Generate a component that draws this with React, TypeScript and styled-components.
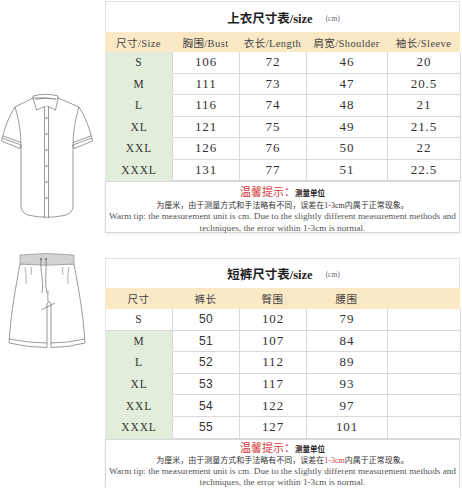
import styled, { createGlobalStyle } from "styled-components";

const GlobalStyle = createGlobalStyle`
  html, body {
    margin: 0;
    padding: 0;
    background: #ffffff;
  }
`;

const COLUMNS = "67px 67px 67px 81px 73px";
const LINE = "#d9d9d9";
const SERIF = `"Liberation Serif", "Noto Sans CJK SC", serif`;

const Sheet = styled.div`
  width: 462px;
  height: 488px;
  overflow: hidden;
  background: #ffffff;
  display: flex;
  flex-direction: column;
`;

const Section = styled.section`
  display: flex;
  align-items: flex-start;
`;

const Figure = styled.div<{ $top: number }>`
  width: 105px;
  flex-shrink: 0;
  padding-top: ${(p) => p.$top}px;
  svg {
    display: block;
  }
`;

const Chart = styled.div<{ $top: number }>`
  width: 355px;
  margin-top: ${(p) => p.$top}px;
  display: flex;
  flex-direction: column;
`;

const Title = styled.div<{ $h: number }>`
  height: ${(p) => p.$h}px;
  box-sizing: border-box;
  border: 1px solid #e3e3e3;
  border-bottom: none;
  display: flex;
  align-items: center;
  justify-content: center;
  gap: 13px;
  padding-left: 2px;
`;

const TitleText = styled.span`
  font-family: ${SERIF};
  font-weight: bold;
  font-size: 12.5px;
  color: #1e1e1e;
`;

const Unit = styled.span`
  font-family: ${SERIF};
  font-size: 7.5px;
  color: #666;
  margin-top: 2px;
`;

const HeadRow = styled.div<{ $h: number }>`
  display: grid;
  grid-template-columns: ${COLUMNS};
  height: ${(p) => p.$h}px;
  background: #fbe9c6;
`;

const HeadCell = styled.div`
  display: flex;
  align-items: center;
  justify-content: center;
  font-family: ${SERIF};
  font-size: 10.5px;
  letter-spacing: 0.4px;
  color: #444;
  white-space: nowrap;
`;

const Rows = styled.div<{ $row: number }>`
  display: grid;
  grid-template-columns: ${COLUMNS};
  grid-auto-rows: ${(p) => p.$row}px;
  border-left: 1px solid #e6e6e6;
`;

const Cell = styled.div<{ $green?: boolean; $sans?: boolean; $size?: boolean }>`
  box-sizing: border-box;
  display: flex;
  align-items: center;
  justify-content: center;
  background: ${(p) => (p.$green ? "#e2eedb" : "#ffffff")};
  border-right: 1px solid ${LINE};
  border-bottom: 1px solid ${(p) => (p.$green ? "#e2eedb" : LINE)};
  font-family: ${(p) => (p.$sans ? `"Liberation Sans", sans-serif` : SERIF)};
  font-size: ${(p) => (p.$size ? 11.5 : p.$sans ? 12 : 13)}px;
  letter-spacing: ${(p) => (p.$sans ? 0.3 : 0.9)}px;
  color: #333;
`;

const Tip = styled.div<{ $pad: number }>`
  box-sizing: border-box;
  height: 52px;
  border: 1px solid #dadada;
  box-shadow: 0 1px 2px rgba(0, 0, 0, 0.08);
  padding-top: ${(p) => p.$pad}px;
  display: flex;
  flex-direction: column;
  align-items: center;
  text-align: center;
`;

const TipLine = styled.div<{ $h: number }>`
  height: ${(p) => p.$h}px;
  line-height: ${(p) => p.$h}px;
  white-space: nowrap;
`;

const Warn = styled.span`
  font-family: "Noto Sans CJK SC", sans-serif;
  font-size: 11px;
  color: #d2383a;
`;

const WarnSub = styled.span`
  font-family: "Noto Sans CJK SC", sans-serif;
  font-size: 7.5px;
  font-weight: bold;
  color: #222;
`;

const Zh = styled.span`
  font-family: ${SERIF};
  font-size: 8px;
  color: #333;
`;

const Red = styled.span`
  color: #d2383a;
`;

const En = styled.span`
  font-family: "Liberation Serif", serif;
  font-size: 9.2px;
  color: #555;
`;

const shirtRows = [
  ["S", "106", "72", "46", "20"],
  ["M", "111", "73", "47", "20.5"],
  ["L", "116", "74", "48", "21"],
  ["XL", "121", "75", "49", "21.5"],
  ["XXL", "126", "76", "50", "22"],
  ["XXXL", "131", "77", "51", "22.5"],
];

const shortsRows = [
  ["S", "50", "102", "79", ""],
  ["M", "51", "107", "84", ""],
  ["L", "52", "112", "89", ""],
  ["XL", "53", "117", "93", ""],
  ["XXL", "54", "122", "97", ""],
  ["XXXL", "55", "127", "101", ""],
];

const Shirt = () => (
  <svg width="95" height="130" viewBox="0 92 95 130" fill="none" stroke="#555" strokeWidth="0.6" strokeLinejoin="round">
    <path d="M33 98 L15 107 C8 118 4 130 1.5 141 L20 148.5 L21 145 L21 207 Q22 214 30 215.5 Q47 219 64 215.5 Q72 214 73 207 L73 145 L74 148.5 L92.5 141 C90 130 86 118 79 107 L58 98 Z" fill="#fff" />
    <path d="M2.2 138 L20.6 144.8 M2.9 135.8 L21 142.6" />
    <path d="M91.8 138 L73.4 144.8 M91.1 135.8 L73 142.6" />
    <path d="M15 107 C19 120 21 133 21 146 M79 107 C75 120 73 133 73 146" />
    <path d="M33 96 Q46 92.5 58 96 L58 98.5 M33 96 L33 98.5" fill="#fff" />
    <path d="M34 99.5 Q46 96.5 57 99.5" />
    <path d="M33 98 L36.5 110 L45.5 106 M58 98 L55.5 110 L47 106" fill="#fff" />
    <path d="M44.5 107 L44.5 217.5 M48.5 107 L48.5 217.5" />
    {[118, 134, 150, 166, 182, 198].map((y) => (
      <circle key={y} cx="46.5" cy={y} r="0.8" />
    ))}
  </svg>
);

const Shorts = () => (
  <svg width="95" height="100" viewBox="0 250 95 100" fill="none" stroke="#555" strokeWidth="0.6" strokeLinejoin="round">
    <path d="M20 263 C16 285 11 310 9 342 Q28 346.5 47 346.5 L47 303 Q49 298 51 303 L51 346.5 Q68 346.5 85 342 C83 310 78 285 74 263 Z" fill="#fff" />
    <path d="M20 254 Q47 251 74 254 L74 263 Q47 265.5 20 263 Z" fill="#d2d2d2" stroke="#888" />
    <path d="M9.4 338 Q28 342 47 342 M51 342 Q68 342 84.6 338" />
    <path d="M41 258 C40 270 44 280 42 292 M46 258 C47 270 44 280 47 292" />
    <circle cx="41" cy="258" r="0.8" />
    <circle cx="46" cy="258" r="0.8" />
    <path d="M41 309 L55 302 M48 290 Q47.5 296 48 300" />
    <path d="M25 266 Q27 275 26 283 M69 266 Q67 275 68 283 M31 266 Q32 270 31 274 M63 266 Q62 270 63 274" strokeWidth="0.45" />
  </svg>
);

type Table = {
  name: string;
  heads: string[];
  rows: string[][];
  titleH: number;
  headH: number;
  rowH: number;
  greenFrom: number;
  sansCol?: number;
  redRange?: boolean;
  tipPad: number;
  tipLine: number;
};

const SizeChart = ({ t, top }: { t: Table; top: number }) => (
  <Chart $top={top}>
    <Title $h={t.titleH}>
      <TitleText>{t.name}尺寸表/size</TitleText>
      <Unit>(cm)</Unit>
    </Title>
    <HeadRow $h={t.headH}>
      {t.heads.map((h, i) => (
        <HeadCell key={i}>{h}</HeadCell>
      ))}
    </HeadRow>
    <Rows $row={t.rowH}>
      {t.rows.map((r, ri) =>
        r.map((v, ci) => (
          <Cell
            key={`${ri}-${ci}`}
            $green={ci === 0 && ri >= t.greenFrom}
            $size={ci === 0}
            $sans={ci === t.sansCol}
          >
            {v}
          </Cell>
        ))
      )}
    </Rows>
    <Tip $pad={t.tipPad}>
      <TipLine $h={t.tipLine}>
        <Warn>温馨提示：</Warn>
        <WarnSub>测量单位</WarnSub>
      </TipLine>
      <TipLine $h={t.tipLine}>
        <Zh>
          为厘米，由于测量方式和手法略有不同，误差在
          {t.redRange ? <Red>1-3cm</Red> : "1-3cm"}
          内属于正常现象。
        </Zh>
      </TipLine>
      <TipLine $h={t.tipLine}>
        <En>Warm tip: the measurement unit is cm. Due to the slightly different measurement methods and</En>
      </TipLine>
      <TipLine $h={t.tipLine}>
        <En>techniques, the error within 1-3cm is normal.</En>
      </TipLine>
    </Tip>
  </Chart>
);

const shirtTable: Table = {
  name: "上衣",
  heads: ["尺寸/Size", "胸围/Bust", "衣长/Length", "肩宽/Shoulder", "袖长/Sleeve"],
  rows: shirtRows,
  titleH: 31,
  headH: 20,
  rowH: 21.5,
  greenFrom: 0,
  tipPad: 3,
  tipLine: 11.6,
};

const shortsTable: Table = {
  name: "短裤",
  heads: ["尺寸", "裤长", "臀围", "腰围", ""],
  rows: shortsRows,
  titleH: 30,
  headH: 21,
  rowH: 21.6,
  greenFrom: 1,
  sansCol: 1,
  redRange: true,
  tipPad: 1,
  tipLine: 11.2,
};

export default function App() {
  return (
    <>
      <GlobalStyle />
      <Sheet>
        <Section>
          <Figure $top={92}>
            <Shirt />
          </Figure>
          <SizeChart t={shirtTable} top={1} />
        </Section>
        <Section>
          <Figure $top={18}>
            <Shorts />
          </Figure>
          <SizeChart t={shortsTable} top={25} />
        </Section>
      </Sheet>
    </>
  );
}
